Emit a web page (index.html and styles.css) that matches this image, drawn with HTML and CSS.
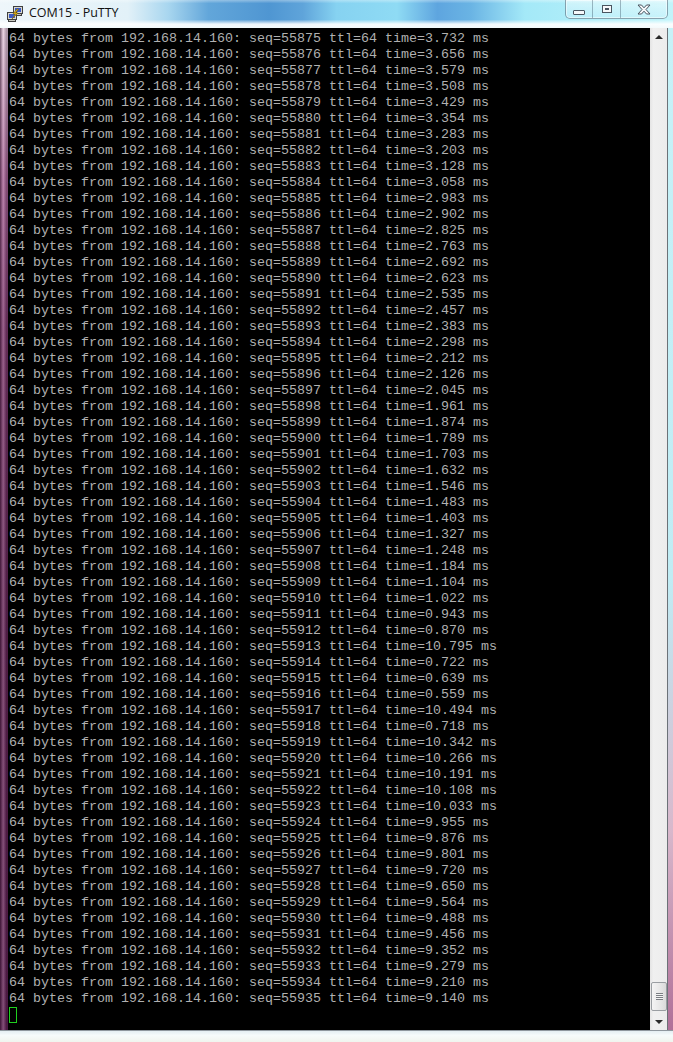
FILE: index.html
```html
<!DOCTYPE html>
<html lang="en">
<head>
  <meta charset="UTF-8">
  <meta name="viewport" content="width=device-width, initial-scale=1.0">
  <title>COM15 - PuTTY</title>
  <link rel="stylesheet" href="styles.css">
</head>
<body>
  <div class="window">
    <div class="titlebar">
      <svg class="app-icon" width="16" height="16" viewBox="0 0 16 16">
        <!-- back terminal -->
        <rect x="6.5" y="0.5" width="9" height="7" fill="#d8d8d0" stroke="#404040"/>
        <rect x="8" y="2" width="6" height="4" fill="#3a5ac8"/>
        <rect x="7.5" y="7.5" width="7" height="2" fill="#c8c8c0" stroke="#404040"/>
        <!-- front terminal -->
        <rect x="0.5" y="6.5" width="9" height="7" fill="#d8d8d0" stroke="#404040"/>
        <rect x="2" y="8" width="6" height="4" fill="#3a5ac8"/>
        <rect x="1.5" y="13.5" width="7" height="2" fill="#c8c8c0" stroke="#404040"/>
        <!-- bolt -->
        <path d="M10 3 L6 8 L8.5 8 L5 13 L11 7 L8.5 7 L11.5 3 Z" fill="#f4c81c" stroke="#7a5a00" stroke-width="0.6"/>
      </svg>
      <span class="title">COM15 - PuTTY</span>
      <div class="controls">
        <div class="ctl ctl-min"><span class="glyph-min"></span></div>
        <div class="ctl ctl-max"><span class="glyph-max"></span></div>
        <div class="ctl ctl-close">
          <svg width="14" height="11" viewBox="0 0 14 11">
            <path d="M1 1 L4.5 1 L7 3.8 L9.5 1 L13 1 L9 5.5 L13 10 L9.5 10 L7 7.2 L4.5 10 L1 10 L5 5.5 Z" fill="#f6f8fa" stroke="#4a5560" stroke-width="1" stroke-linejoin="round"/>
          </svg>
        </div>
      </div>
    </div>

    <div class="client">
      <div class="edge-left"></div>
      <div class="terminal">
<pre class="screen">64 bytes from 192.168.14.160: seq=55875 ttl=64 time=3.732 ms
64 bytes from 192.168.14.160: seq=55876 ttl=64 time=3.656 ms
64 bytes from 192.168.14.160: seq=55877 ttl=64 time=3.579 ms
64 bytes from 192.168.14.160: seq=55878 ttl=64 time=3.508 ms
64 bytes from 192.168.14.160: seq=55879 ttl=64 time=3.429 ms
64 bytes from 192.168.14.160: seq=55880 ttl=64 time=3.354 ms
64 bytes from 192.168.14.160: seq=55881 ttl=64 time=3.283 ms
64 bytes from 192.168.14.160: seq=55882 ttl=64 time=3.203 ms
64 bytes from 192.168.14.160: seq=55883 ttl=64 time=3.128 ms
64 bytes from 192.168.14.160: seq=55884 ttl=64 time=3.058 ms
64 bytes from 192.168.14.160: seq=55885 ttl=64 time=2.983 ms
64 bytes from 192.168.14.160: seq=55886 ttl=64 time=2.902 ms
64 bytes from 192.168.14.160: seq=55887 ttl=64 time=2.825 ms
64 bytes from 192.168.14.160: seq=55888 ttl=64 time=2.763 ms
64 bytes from 192.168.14.160: seq=55889 ttl=64 time=2.692 ms
64 bytes from 192.168.14.160: seq=55890 ttl=64 time=2.623 ms
64 bytes from 192.168.14.160: seq=55891 ttl=64 time=2.535 ms
64 bytes from 192.168.14.160: seq=55892 ttl=64 time=2.457 ms
64 bytes from 192.168.14.160: seq=55893 ttl=64 time=2.383 ms
64 bytes from 192.168.14.160: seq=55894 ttl=64 time=2.298 ms
64 bytes from 192.168.14.160: seq=55895 ttl=64 time=2.212 ms
64 bytes from 192.168.14.160: seq=55896 ttl=64 time=2.126 ms
64 bytes from 192.168.14.160: seq=55897 ttl=64 time=2.045 ms
64 bytes from 192.168.14.160: seq=55898 ttl=64 time=1.961 ms
64 bytes from 192.168.14.160: seq=55899 ttl=64 time=1.874 ms
64 bytes from 192.168.14.160: seq=55900 ttl=64 time=1.789 ms
64 bytes from 192.168.14.160: seq=55901 ttl=64 time=1.703 ms
64 bytes from 192.168.14.160: seq=55902 ttl=64 time=1.632 ms
64 bytes from 192.168.14.160: seq=55903 ttl=64 time=1.546 ms
64 bytes from 192.168.14.160: seq=55904 ttl=64 time=1.483 ms
64 bytes from 192.168.14.160: seq=55905 ttl=64 time=1.403 ms
64 bytes from 192.168.14.160: seq=55906 ttl=64 time=1.327 ms
64 bytes from 192.168.14.160: seq=55907 ttl=64 time=1.248 ms
64 bytes from 192.168.14.160: seq=55908 ttl=64 time=1.184 ms
64 bytes from 192.168.14.160: seq=55909 ttl=64 time=1.104 ms
64 bytes from 192.168.14.160: seq=55910 ttl=64 time=1.022 ms
64 bytes from 192.168.14.160: seq=55911 ttl=64 time=0.943 ms
64 bytes from 192.168.14.160: seq=55912 ttl=64 time=0.870 ms
64 bytes from 192.168.14.160: seq=55913 ttl=64 time=10.795 ms
64 bytes from 192.168.14.160: seq=55914 ttl=64 time=0.722 ms
64 bytes from 192.168.14.160: seq=55915 ttl=64 time=0.639 ms
64 bytes from 192.168.14.160: seq=55916 ttl=64 time=0.559 ms
64 bytes from 192.168.14.160: seq=55917 ttl=64 time=10.494 ms
64 bytes from 192.168.14.160: seq=55918 ttl=64 time=0.718 ms
64 bytes from 192.168.14.160: seq=55919 ttl=64 time=10.342 ms
64 bytes from 192.168.14.160: seq=55920 ttl=64 time=10.266 ms
64 bytes from 192.168.14.160: seq=55921 ttl=64 time=10.191 ms
64 bytes from 192.168.14.160: seq=55922 ttl=64 time=10.108 ms
64 bytes from 192.168.14.160: seq=55923 ttl=64 time=10.033 ms
64 bytes from 192.168.14.160: seq=55924 ttl=64 time=9.955 ms
64 bytes from 192.168.14.160: seq=55925 ttl=64 time=9.876 ms
64 bytes from 192.168.14.160: seq=55926 ttl=64 time=9.801 ms
64 bytes from 192.168.14.160: seq=55927 ttl=64 time=9.720 ms
64 bytes from 192.168.14.160: seq=55928 ttl=64 time=9.650 ms
64 bytes from 192.168.14.160: seq=55929 ttl=64 time=9.564 ms
64 bytes from 192.168.14.160: seq=55930 ttl=64 time=9.488 ms
64 bytes from 192.168.14.160: seq=55931 ttl=64 time=9.456 ms
64 bytes from 192.168.14.160: seq=55932 ttl=64 time=9.352 ms
64 bytes from 192.168.14.160: seq=55933 ttl=64 time=9.279 ms
64 bytes from 192.168.14.160: seq=55934 ttl=64 time=9.210 ms
64 bytes from 192.168.14.160: seq=55935 ttl=64 time=9.140 ms
<span class="cursor"></span></pre>
      </div>
      <div class="scrollbar">
        <div class="arrow arrow-up"></div>
        <div class="track">
          <div class="thumb"><span class="grip"></span></div>
        </div>
        <div class="arrow arrow-down"></div>
      </div>
      <div class="edge-right"></div>
    </div>

    <div class="edge-bottom"></div>
  </div>
</body>
</html>
```

FILE: styles.css
```css
body {
  margin: 0;
  background-color: #dfe9ee;
  font-family: "Open Sans", "Noto Sans", sans-serif;
}

.window {
  width: 673px;
  height: 1042px;
  display: flex;
  flex-direction: column;
  overflow: hidden;
}

/* title bar */

.titlebar {
  height: 28px;
  flex: none;
  display: flex;
  align-items: flex-start;
  background:
    linear-gradient(to bottom, rgba(255, 255, 255, 0.35) 0, rgba(255, 255, 255, 0) 12%, rgba(255, 255, 255, 0) 70%, rgba(255, 255, 255, 0.9) 86%, #f3fafc 100%),
    linear-gradient(to right, #eef6fa 0, #e2f1f8 19%, #a8d6ef 25%, #62a6da 31%, #4f96d2 40%, #5fa4da 45%, #86d2f1 50%, #8fdbf4 59%, #5ea5df 65%, #6ab4e4 70%, #a4e9f8 78%, #c2f4fa 100%);
}

.app-icon {
  margin: 6px 0 0 7px;
  flex: none;
}

.title {
  margin: 5px 0 0 6px;
  font-size: 12.5px;
  line-height: 16px;
  color: #111;
}

.controls {
  margin-left: auto;
  margin-right: 5px;
  display: flex;
  height: 18px;
  border: 1px solid rgba(40, 60, 80, 0.45);
  border-top: none;
  border-radius: 0 0 5px 5px;
  background: linear-gradient(to bottom, rgba(255, 255, 255, 0.45), rgba(210, 240, 250, 0.3));
  box-shadow: inset 0 0 0 1px rgba(255, 255, 255, 0.5);
}

.ctl {
  display: flex;
  align-items: center;
  justify-content: center;
}

.ctl-min {
  width: 26px;
  border-right: 1px solid rgba(40, 60, 80, 0.35);
}

.ctl-max {
  width: 27px;
  border-right: 1px solid rgba(40, 60, 80, 0.35);
}

.ctl-close {
  width: 46px;
}

.glyph-min {
  width: 10px;
  height: 3px;
  margin-top: 6px;
  background: #f6f8fa;
  border: 1px solid #4a5560;
  border-radius: 1px;
}

.glyph-max {
  width: 8px;
  height: 6px;
  border: 1px solid #4a5560;
  box-shadow: inset 0 0 0 2px #f6f8fa, inset 0 0 0 3px #4a5560;
  margin-bottom: 1px;
}

/* client area */

.client {
  flex: 1;
  display: flex;
  min-height: 0;
}

.edge-left {
  width: 8px;
  flex: none;
  background:
    linear-gradient(to right, rgba(40, 10, 35, 0.6) 0, rgba(255, 220, 240, 0.25) 40%, rgba(40, 10, 35, 0.3) 80%),
    linear-gradient(to bottom, #e8d8e4 0, #a86898 15%, #7a3a6c 30%, #5e2452 60%, #5a2050 100%);
}

.terminal {
  flex: 1;
  background-color: #000;
  padding: 3px 0 0 1px;
  overflow: hidden;
}

.screen {
  margin: 0;
  font-family: "Liberation Mono", "Courier New", monospace;
  font-size: 13.333px;
  line-height: 16px;
  color: #b0b0b0;
}

.cursor {
  display: inline-block;
  width: 8px;
  height: 16px;
  box-sizing: border-box;
  border: 1px solid #1fd01f;
  vertical-align: top;
}

/* scrollbar */

.scrollbar {
  width: 17px;
  flex: none;
  display: flex;
  flex-direction: column;
  background: linear-gradient(to right, #e4e4e4 0, #f0f0f0 20%, #ececec 100%);
  border-right: 1px solid #6c7278;
}

.arrow {
  height: 17px;
  flex: none;
  display: flex;
  align-items: center;
  justify-content: center;
}

.arrow::before {
  content: "";
  border-left: 4px solid transparent;
  border-right: 4px solid transparent;
}

.arrow-up::before {
  border-bottom: 4px solid #2a2a2a;
}

.arrow-down::before {
  border-top: 4px solid #2a2a2a;
}

.track {
  flex: 1;
  display: flex;
  flex-direction: column;
  justify-content: flex-end;
}

.thumb {
  height: 27px;
  margin: 0 0 2px 1px;
  width: 14px;
  border: 1px solid #9a9ea2;
  border-radius: 2px;
  background: linear-gradient(to right, #f4f4f4, #e6e6e6 60%, #dadada);
  display: flex;
  align-items: center;
  justify-content: center;
}

.grip {
  width: 7px;
  height: 7px;
  background: repeating-linear-gradient(to bottom, #7a7e82 0, #7a7e82 1px, #f4f4f4 1px, #f4f4f4 2px);
}

.edge-right {
  width: 5px;
  flex: none;
  background: linear-gradient(to bottom, #c6f2f8 0, #c0ecf4 55%, #d8b8cc 80%, #b07098 100%);
}

.edge-bottom {
  height: 11px;
  flex: none;
  border-top: 1px solid #8e979e;
  background: linear-gradient(to bottom, #e4eef2 0, #f6fbfb 40%, #f0f4ee 100%);
}
```
